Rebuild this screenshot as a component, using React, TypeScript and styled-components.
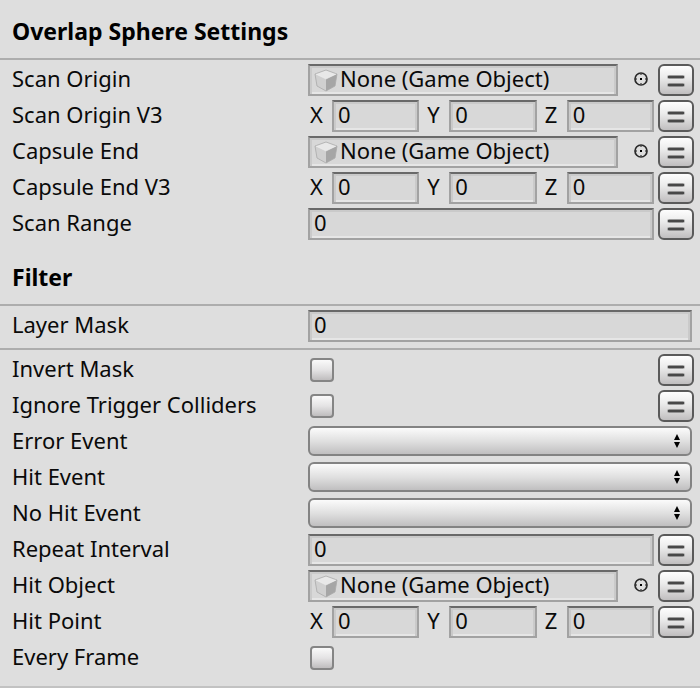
import React, { useId } from 'react';
import styled, { createGlobalStyle } from 'styled-components';

const GlobalStyle = createGlobalStyle`
  *, *::before, *::after {
    box-sizing: border-box;
  }
  body {
    margin: 0;
    background: #dedede;
    color: #0a0a0a;
    font-family: "Noto Sans", "Open Sans", sans-serif;
    font-size: 22px;
    line-height: 24px;
  }
  button, input, select {
    margin: 0;
    color: inherit;
    font: inherit;
  }
`;

const Inspector = styled.main`
  padding-bottom: 6px;
  border-bottom: 2px solid #c2c2c2;
`;

const Heading = styled.h2`
  display: flex;
  align-items: center;
  height: 58px;
  margin: 0;
  padding: 4px 12px 0;
  color: #000;
  font-size: 23px;
  font-weight: 700;
`;

const Group = styled.div`
  padding: 2px 0 4px;
  border-top: 2px solid #adadad;
`;

const Row = styled.div`
  display: grid;
  grid-template-columns: 296px minmax(0, 1fr);
  align-items: center;
  height: 36px;
  padding: 0 6px 0 12px;
`;

const Caption = styled.label`
  padding-bottom: 4px;
  white-space: nowrap;
`;

const Controls = styled.div<{ $full?: boolean }>`
  display: flex;
  align-items: center;
  gap: 4px;
  padding-right: ${(p) => (p.$full ? 2 : 0)}px;
`;

const Value = styled.div`
  display: flex;
  flex: 1;
  min-width: 0;
`;

const TextField = styled.input`
  flex: 1;
  width: 100%;
  min-width: 0;
  height: 32px;
  padding: 0 4px 4px;
  border: 2px solid #a2a2a2;
  border-top-color: #696969;
  border-radius: 0;
  outline: none;
  background: #d8d8d8;
  box-shadow: inset 2px 2px 0 #cacaca, inset -2px 0 0 #cacaca, inset 0 -2px 0 #e6e6e6;
`;

const Axes = styled.div`
  display: grid;
  flex: 1;
  grid-template-columns: repeat(3, minmax(0, 1fr));
  gap: 6px;
`;

const Axis = styled.label`
  display: grid;
  grid-template-columns: 24px minmax(0, 1fr);
  align-items: center;
`;

const AxisName = styled.span`
  padding: 0 0 4px 2px;
`;

const ObjectSlot = styled.button`
  display: flex;
  flex: 1;
  align-items: center;
  gap: 2px;
  min-width: 0;
  height: 32px;
  padding: 0 4px;
  border: 2px solid #a2a2a2;
  border-top-color: #696969;
  background: #d8d8d8;
  box-shadow: inset 2px 2px 0 #cacaca, inset -2px 0 0 #cacaca, inset 0 -2px 0 #e6e6e6;
  text-align: left;
  white-space: nowrap;
`;

const SlotText = styled.span`
  padding-bottom: 4px;
`;

const PickerButton = styled.button`
  display: flex;
  align-items: center;
  justify-content: center;
  width: 36px;
  height: 32px;
  padding: 0 0 2px 10px;
  border: 0;
  background: none;
`;

const BindButton = styled.button`
  display: flex;
  flex: none;
  align-items: center;
  justify-content: center;
  width: 36px;
  height: 32px;
  padding: 0;
  border: 2px solid #5a5a5a;
  border-radius: 6px;
  background: linear-gradient(#fdfdfd, #ececec 40%, #c0bebf);
`;

const Toggle = styled.input`
  width: 24px;
  height: 24px;
  margin: 0 2px;
  border: 2px solid #858585;
  border-radius: 4px;
  appearance: none;
  background: linear-gradient(#fafafa, #e4e3e4 50%, #bfbdbe);

  &:checked {
    background: #555;
  }
`;

const Popup = styled.div`
  display: grid;
  flex: 1;
  align-items: center;
  height: 30px;
  margin-bottom: 2px;
  & > * {
    grid-area: 1 / 1;
  }
  & > svg {
    justify-self: end;
    margin-right: 11px;
    pointer-events: none;
  }
`;

const PopupSelect = styled.select`
  width: 100%;
  height: 30px;
  padding: 0 28px 0 8px;
  border: 2px solid #838383;
  border-radius: 6px;
  appearance: none;
  background: linear-gradient(#fbfbfb, #e0e0e0 50%, #c0bfc0);
`;

const CubeIcon = () => (
  <svg width="24" height="24" viewBox="0 0 24 24" aria-hidden="true">
    <path d="M1 6 12 2l11 4-11 5z" fill="#e8e8e8" />
    <path d="M1 6l11 5v12L3 18z" fill="#d0d0d0" />
    <path d="M23 6 12 11v12l9-5z" fill="#a6a6a6" />
    <path d="M1 6 12 2l11 4M1 6l2 12 9 5 9-5 2-12" fill="none" stroke="#aaaaaa" strokeOpacity=".8" />
    <path d="M2 6l10 5 10-5" fill="none" stroke="#eeeeee" strokeOpacity=".6" />
  </svg>
);

const TargetIcon = () => (
  <svg width="16" height="16" viewBox="0 0 16 16" aria-hidden="true">
    <circle cx="8" cy="8" r="6" fill="none" stroke="#2a2a2a" strokeWidth="1.7" />
    <path d="M7 3h2v1H7zM7 12h2v1H7zM3 7h1v2H3zM12 7h1v2h-1z" fill="#777" />
    <path d="M7 7h2v2H7z" fill="#000" />
  </svg>
);

const EqualsIcon = () => (
  <svg width="20" height="16" viewBox="0 0 20 16" aria-hidden="true">
    <path d="M3 5h14M3 13h14" stroke="#777" strokeWidth="4" strokeLinecap="round" strokeOpacity=".45" />
    <path d="M3 5h14M3 13h14" stroke="#484848" strokeWidth="2.4" strokeLinecap="round" />
  </svg>
);

const ArrowsIcon = () => (
  <svg width="8" height="14" viewBox="0 0 8 14" aria-hidden="true">
    <path d="M4 0 7 6H1zM1 8h6l-3 6z" fill="#000" />
  </svg>
);

type Kind = 'object' | 'vector' | 'text' | 'toggle' | 'popup';

interface Field {
  label: string;
  kind: Kind;
  bindable?: boolean;
}

const scanFields: Field[] = [
  { label: 'Scan Origin', kind: 'object', bindable: true },
  { label: 'Scan Origin V3', kind: 'vector', bindable: true },
  { label: 'Capsule End', kind: 'object', bindable: true },
  { label: 'Capsule End V3', kind: 'vector', bindable: true },
  { label: 'Scan Range', kind: 'text', bindable: true },
];

const maskFields: Field[] = [{ label: 'Layer Mask', kind: 'text' }];

const resultFields: Field[] = [
  { label: 'Invert Mask', kind: 'toggle', bindable: true },
  { label: 'Ignore Trigger Colliders', kind: 'toggle', bindable: true },
  { label: 'Error Event', kind: 'popup' },
  { label: 'Hit Event', kind: 'popup' },
  { label: 'No Hit Event', kind: 'popup' },
  { label: 'Repeat Interval', kind: 'text', bindable: true },
  { label: 'Hit Object', kind: 'object', bindable: true },
  { label: 'Hit Point', kind: 'vector', bindable: true },
  { label: 'Every Frame', kind: 'toggle' },
];

function FieldValue({ id, field }: { id: string; field: Field }) {
  switch (field.kind) {
    case 'object':
      return (
        <>
          <ObjectSlot id={id} type="button">
            <CubeIcon />
            <SlotText>None (Game Object)</SlotText>
          </ObjectSlot>
          <PickerButton type="button" aria-label={`Pick ${field.label}`}>
            <TargetIcon />
          </PickerButton>
        </>
      );
    case 'vector':
      return (
        <Axes>
          {['X', 'Y', 'Z'].map((axis, i) => (
            <Axis key={axis}>
              <AxisName>{axis}</AxisName>
              <TextField id={i === 0 ? id : undefined} defaultValue="0" />
            </Axis>
          ))}
        </Axes>
      );
    case 'toggle':
      return <Toggle id={id} type="checkbox" />;
    case 'popup':
      return (
        <Popup>
          <PopupSelect id={id} defaultValue="">
            <option value="" aria-label="No event" />
          </PopupSelect>
          <ArrowsIcon />
        </Popup>
      );
    default:
      return <TextField id={id} defaultValue="0" />;
  }
}

function FieldRow({ field }: { field: Field }) {
  const id = useId();
  return (
    <Row>
      <Caption htmlFor={id}>{field.label}</Caption>
      <Controls $full={!field.bindable}>
        <Value>
          <FieldValue id={id} field={field} />
        </Value>
        {field.bindable && (
          <BindButton type="button" aria-label={`Use variable for ${field.label}`}>
            <EqualsIcon />
          </BindButton>
        )}
      </Controls>
    </Row>
  );
}

function FieldGroup({ fields }: { fields: Field[] }) {
  return (
    <Group>
      {fields.map((field) => (
        <FieldRow key={field.label} field={field} />
      ))}
    </Group>
  );
}

export default function App() {
  return (
    <>
      <GlobalStyle />
      <Inspector>
        <Heading>Overlap Sphere Settings</Heading>
        <FieldGroup fields={scanFields} />
        <Heading>Filter</Heading>
        <FieldGroup fields={maskFields} />
        <FieldGroup fields={resultFields} />
      </Inspector>
    </>
  );
}
